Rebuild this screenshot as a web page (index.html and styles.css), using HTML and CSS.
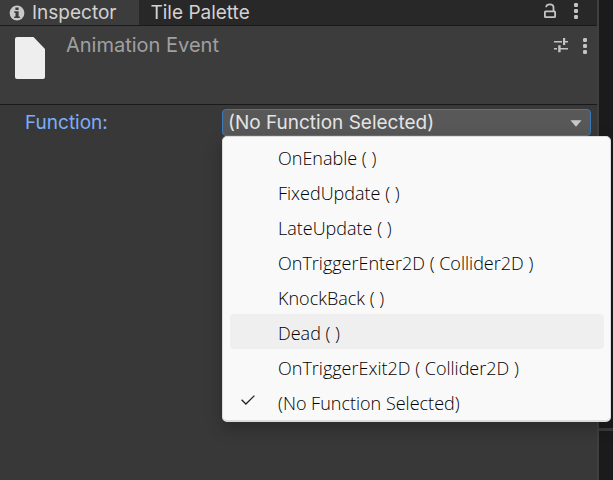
FILE: index.html
```html
<!DOCTYPE html>
<html lang="en">
<head>
<meta charset="utf-8">
<title>Inspector</title>
<link rel="stylesheet" href="styles.css">
</head>
<body>
<main class="inspector">
  <div class="tabs">
    <button class="tab tab-active" type="button">
      <svg width="16" height="16" viewBox="0 0 16 16" aria-hidden="true"><circle cx="8" cy="8" r="7.4" fill="#c8c8c8"/><path d="M6.4 2.4h3.2v2.6H6.4zM5.2 6.2h4.4v5.2h1.2V13H5.2v-1.6h1.3V7.8H5.2z" fill="#3c3c3c"/></svg>
      <span>Inspector</span>
    </button>
    <button class="tab" type="button">Tile Palette</button>
    <div class="tab-tools">
      <button class="tool" type="button" aria-label="Lock">
        <svg width="14" height="16" viewBox="0 0 14 16" fill="none" stroke="#c4c4c4" stroke-width="1.8" aria-hidden="true"><rect x="1.9" y="8.4" width="10.2" height="5.7" rx=".6"/><path d="M3.2 4.2C3.2 2.2 4.8 1.4 6.8 1.4c2.3 0 3.7 1 3.7 3v4"/></svg>
      </button>
      <button class="tool" type="button" aria-label="Tab menu">
        <svg width="4" height="16" viewBox="0 0 4 16" fill="#c4c4c4" aria-hidden="true"><rect x="0" y="0" width="4" height="4" rx="1.2"/><rect x="0" y="6" width="4" height="4" rx="1.2"/><rect x="0" y="12" width="4" height="4" rx="1.2"/></svg>
      </button>
    </div>
  </div>
  <header class="header">
    <svg class="file" width="30" height="42" viewBox="0 0 30 42" aria-hidden="true"><path d="M2 0H18.5L30 12V40a2 2 0 0 1-2 2H2a2 2 0 0 1-2-2V2a2 2 0 0 1 2-2z" fill="#eee"/></svg>
    <h1 class="title">Animation Event</h1>
    <div class="header-tools">
      <button class="tool" type="button" aria-label="Presets">
        <svg width="14" height="16" viewBox="0 0 14 16" fill="#c4c4c4" aria-hidden="true"><path d="M0 3h8v1.4H0zM9 0h2.2v7H9zM11 3h3v1.4h-3zM0 10h3v1.4H0zM4.2 7.2h2.4v7H4.2zM6.5 10H14v1.4H6.5z"/></svg>
      </button>
      <button class="tool" type="button" aria-label="Component menu">
        <svg width="4" height="16" viewBox="0 0 4 16" fill="#c4c4c4" aria-hidden="true"><rect x="0" y="0" width="4" height="4" rx="1.2"/><rect x="0" y="6" width="4" height="4" rx="1.2"/><rect x="0" y="12" width="4" height="4" rx="1.2"/></svg>
      </button>
    </div>
  </header>
  <div class="field">
    <label class="label" for="function">Function:</label>
    <div class="control">
      <select class="select" id="function"><option>(No Function Selected)</option></select>
      <svg class="arrow" width="12" height="7" viewBox="0 0 12 7" aria-hidden="true"><path d="M.5.3h11L6 6.7z" fill="#c8c8c8"/></svg>
      <div class="menu" role="menu">
        <button class="item" type="button" role="menuitem">OnEnable ( )</button>
        <button class="item" type="button" role="menuitem">FixedUpdate ( )</button>
        <button class="item" type="button" role="menuitem">LateUpdate ( )</button>
        <button class="item" type="button" role="menuitem">OnTriggerEnter2D ( Collider2D )</button>
        <button class="item" type="button" role="menuitem">KnockBack ( )</button>
        <button class="item item-hover" type="button" role="menuitem">Dead ( )</button>
        <button class="item" type="button" role="menuitem">OnTriggerExit2D ( Collider2D )</button>
        <button class="item" type="button" role="menuitem"><svg class="check" width="14" height="10" viewBox="0 0 14 10" fill="none" stroke="#222" stroke-width="1.3" aria-hidden="true"><path d="M.6 4.8 4.9 9 13.4.6"/></svg>(No Function Selected)</button>
      </div>
    </div>
  </div>
</main>
<aside class="scene"></aside>
</body>
</html>
```
FILE: styles.css
```css
* {
  box-sizing: border-box;
}

body {
  display: flex;
  min-height: 100vh;
  margin: 0;
  background: #1b1b1b;
  color: #d2d2d2;
  font-family: Inter, "Liberation Sans", sans-serif;
  font-size: 19px;
  line-height: 24px;
}

button {
  margin: 0;
  border: 0;
  background: none;
  color: inherit;
  font: inherit;
}

svg {
  display: block;
  flex: none;
}

.inspector {
  flex: 1;
  border-right: 2px solid #3f3f3f;
  background: #383838;
}

.tabs {
  display: flex;
  height: 26px;
  border-bottom: 1px solid #1a1a1a;
  background: #282828;
}

.tab {
  display: flex;
  align-items: center;
  gap: 7px;
  padding: 0 12px;
}

.tab-active {
  padding: 0 22px 0 9px;
  background: #3c3c3c;
}

.tab-tools,
.header-tools {
  display: flex;
  align-items: flex-start;
  gap: 17px;
  margin-left: auto;
  padding: 3px 19px 0 0;
}

.header-tools {
  gap: 15px;
  padding: 12px 10px 0 0;
}

.tool {
  padding: 0;
}

.header {
  display: flex;
  align-items: flex-start;
  height: 79px;
  padding-left: 15px;
  border-bottom: 1px solid #1a1a1a;
  background: #3c3c3c;
}

.file {
  margin-top: 11px;
}

.title {
  margin: 7px 0 0 21px;
  color: #a0a0a0;
  font-size: 20px;
  font-weight: 400;
}

.field {
  display: flex;
  align-items: center;
  padding: 4px 6px 0 25px;
}

.label {
  width: 197px;
  color: #7baefa;
}

.control {
  position: relative;
  flex: 1;
}

.select {
  display: block;
  width: 100%;
  height: 27px;
  padding: 1px 24px 0 5px;
  border: 1px solid #3a79bb;
  border-radius: 4px;
  outline: 0;
  appearance: none;
  background: #585858;
  color: #e4e4e4;
  font: inherit;
}

.arrow {
  position: absolute;
  top: 11px;
  right: 9px;
  pointer-events: none;
}

.menu {
  position: absolute;
  top: 27px;
  left: 0;
  right: -20px;
  padding: 2px 6px 1px 7px;
  border: 1px solid #dcdcdc;
  border-bottom-width: 2px;
  border-radius: 5px;
  background: #f9f9f9;
  box-shadow: 0 6px 16px rgba(0, 0, 0, 0.25);
  color: #000;
  font-family: "Open Sans", "Noto Sans", sans-serif;
  font-size: 18px;
  font-weight: 300;
}

.item {
  display: block;
  position: relative;
  width: 100%;
  height: 35px;
  padding: 2px 0 0 48px;
  border-radius: 4px;
  text-align: left;
}

.item-hover {
  background: #efefef;
}

.check {
  position: absolute;
  top: 11px;
  left: 11px;
}

.scene {
  width: 14px;
  background: linear-gradient(#3a3a3a, #3a3a3a) 0 428px / 100% 3px no-repeat #1b1b1b;
}
```
